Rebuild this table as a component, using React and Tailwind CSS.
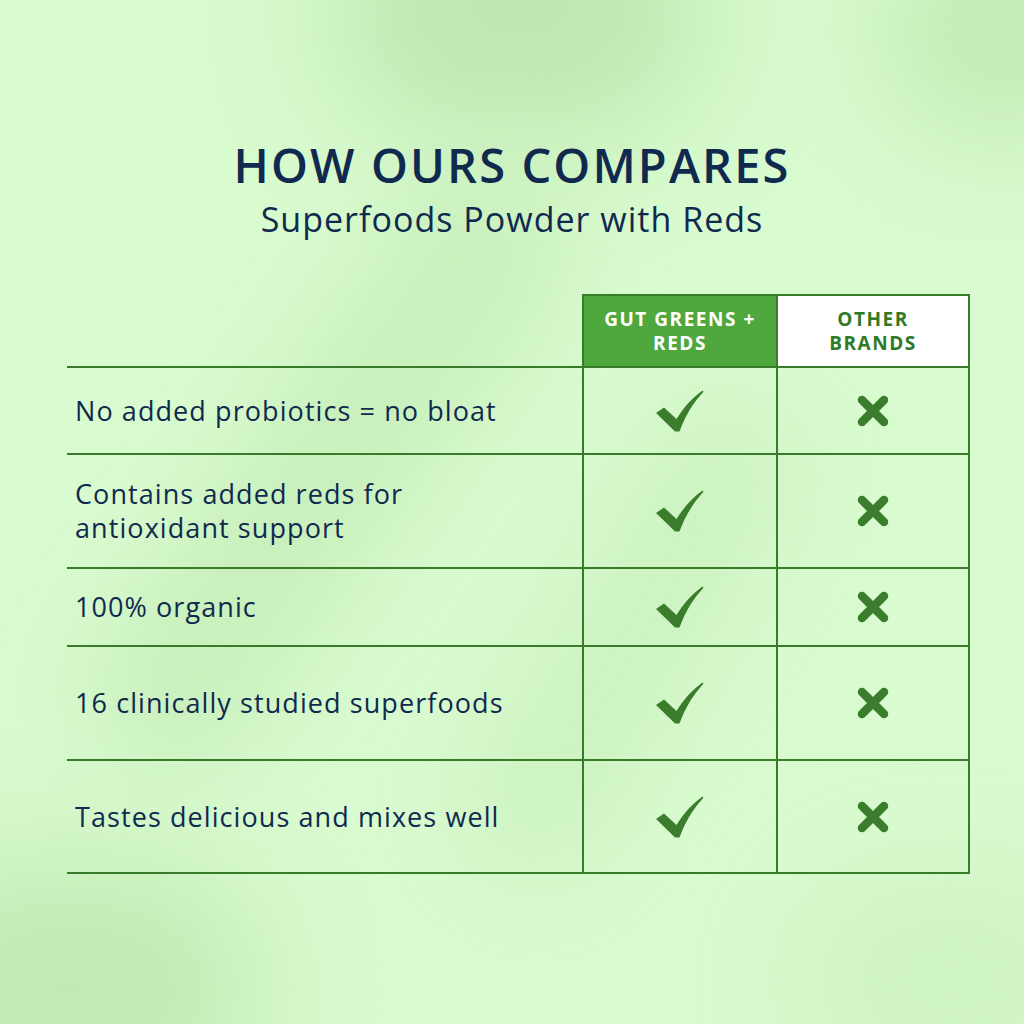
import React from "react";

const rows = [
  { text: ["No added probiotics = no bloat"], h: "h-[87px]" },
  { text: ["Contains added reds for", "antioxidant support"], h: "h-[114px]" },
  { text: ["100% organic"], h: "h-[78px]" },
  { text: ["16 clinically studied superfoods"], h: "h-[114px]" },
  { text: ["Tastes delicious and mixes well"], h: "h-[115px]" },
];

function Check() {
  return (
    <svg width="48" height="42" viewBox="0 0 48 42" className="block">
      <path
        d="M0 23 L8 17.5 L20.5 29 C28 17 36 8 46.5 0.5 L47.5 1.8 C38 12 30 24 23.5 41.5 L19 41.5 Z"
        fill="#3b7d2d"
      />
    </svg>
  );
}

function Cross() {
  return (
    <svg width="32" height="32" viewBox="0 0 32 32" className="block">
      <path d="M5 5 L27 27 M27 5 L5 27" stroke="#3b7d2d" strokeWidth="8.5" strokeLinecap="round" />
    </svg>
  );
}

export default function App() {
  return (
    <div
      className="relative w-[1024px] h-[1024px] overflow-hidden bg-[#d8fbcf]"
      style={{ fontFamily: "'Open Sans', Lato, sans-serif" }}
    >
      {/* decorative blurred background shapes */}
      <div className="absolute left-[330px] top-[-120px] w-[380px] h-[260px] rounded-full bg-[#b9e3a9] opacity-80 blur-[60px]" />
      <div className="absolute left-[250px] top-[120px] w-[160px] h-[700px] rotate-[35deg] rounded-full bg-[#c2eab3] opacity-70 blur-[50px]" />
      <div className="absolute left-[880px] top-[-80px] w-[240px] h-[220px] rounded-full bg-[#c0e8b0] opacity-80 blur-[50px]" />
      <div className="absolute left-[-120px] top-[860px] w-[380px] h-[260px] rounded-full bg-[#bde6ad] opacity-80 blur-[60px]" />
      <div className="absolute left-[560px] top-[380px] w-[140px] h-[520px] rotate-[30deg] rounded-full bg-[#c6edb8] opacity-60 blur-[50px]" />
      <div className="absolute left-[800px] top-[880px] w-[300px] h-[200px] rounded-full bg-[#c8eeba] opacity-60 blur-[60px]" />

      <div className="relative flex flex-col">
        <div className="pt-[137px] flex flex-col items-center text-[#10294f]">
          <h1 className="text-[47px] leading-[56px] font-semibold tracking-[0.045em]">HOW OURS COMPARES</h1>
          <p className="mt-[5px] text-[34px] leading-[42px] tracking-[0.03em]">Superfoods Powder with Reds</p>
        </div>

        <div className="ml-[67px] mt-[54px] w-[903px] flex flex-col">
          {/* header */}
          <div className="flex h-[72px]">
            <div className="w-[515px]" />
            <div className="w-[194px] border-t-2 border-l-2 border-[#3a7a2b] bg-[#4fa83d] flex flex-col items-center justify-center text-white text-[19px] leading-[24px] font-bold tracking-[0.08em]">
              <span>GUT GREENS +</span>
              <span>REDS</span>
            </div>
            <div className="w-[194px] border-t-2 border-l-2 border-r-2 border-[#3a7a2b] bg-white flex flex-col items-center justify-center text-[#2f7a25] text-[19px] leading-[24px] font-bold tracking-[0.08em]">
              <span>OTHER</span>
              <span>BRANDS</span>
            </div>
          </div>

          {rows.map((r, i) => (
            <div
              key={i}
              className={`flex ${r.h} border-t-2 border-[#3a7a2b] ${i === rows.length - 1 ? "border-b-2" : ""}`}
            >
              <div className="w-[515px] flex flex-col justify-center pl-[8px] text-[#10294f] text-[27px] leading-[34px] tracking-[0.04em]">
                {r.text.map((t, j) => (
                  <span key={j}>{t}</span>
                ))}
              </div>
              <div className="w-[194px] border-l-2 border-[#3a7a2b] flex items-center justify-center">
                <Check />
              </div>
              <div className="w-[194px] border-l-2 border-r-2 border-[#3a7a2b] flex items-center justify-center">
                <Cross />
              </div>
            </div>
          ))}
        </div>
      </div>
    </div>
  );
}
